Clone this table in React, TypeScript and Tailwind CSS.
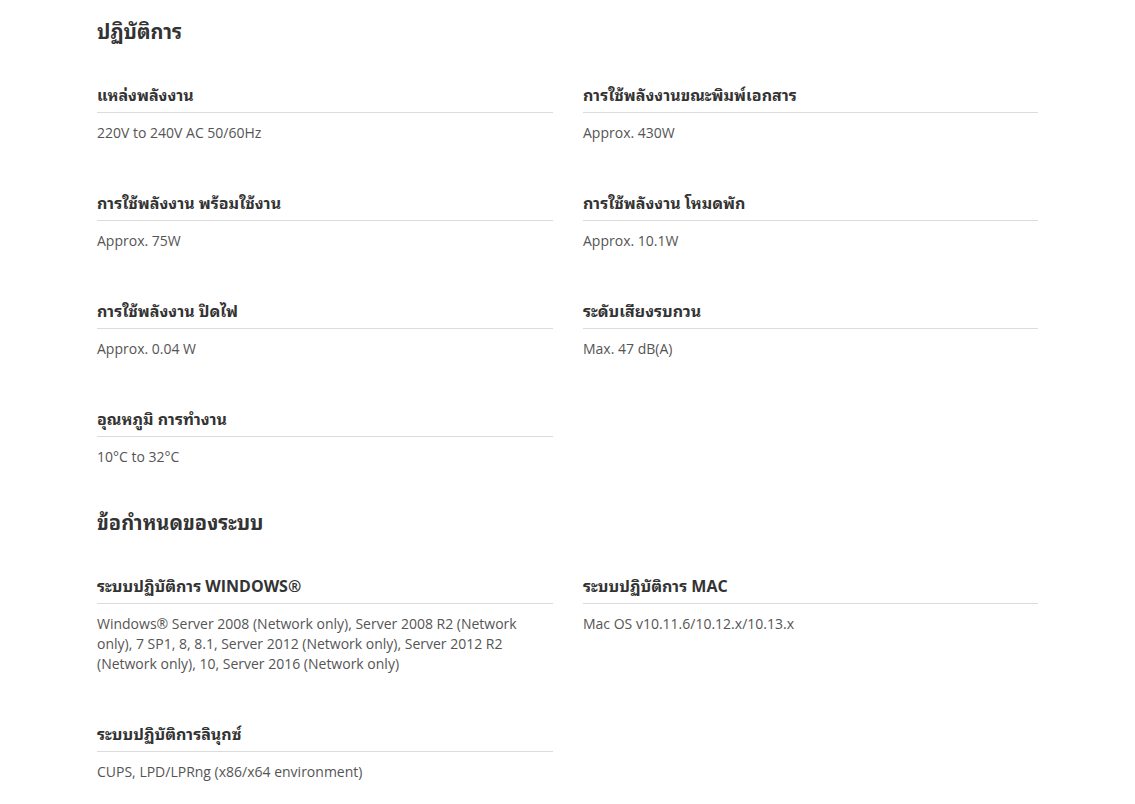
import React from "react";

type Item = { title: string; value: string };

const sections: { heading: string; items: Item[] }[] = [
  {
    heading: "ปฏิบัติการ",
    items: [
      { title: "แหล่งพลังงาน", value: "220V to 240V AC 50/60Hz" },
      { title: "การใช้พลังงานขณะพิมพ์เอกสาร", value: "Approx. 430W" },
      { title: "การใช้พลังงาน พร้อมใช้งาน", value: "Approx. 75W" },
      { title: "การใช้พลังงาน โหมดพัก", value: "Approx. 10.1W" },
      { title: "การใช้พลังงาน ปิดไฟ", value: "Approx. 0.04 W" },
      { title: "ระดับเสียงรบกวน", value: "Max. 47 dB(A)" },
      { title: "อุณหภูมิ การทำงาน", value: "10°C to 32°C" },
    ],
  },
  {
    heading: "ข้อกำหนดของระบบ",
    items: [
      {
        title: "ระบบปฏิบัติการ WINDOWS®",
        value:
          "Windows® Server 2008 (Network only), Server 2008 R2 (Network only), 7 SP1, 8, 8.1, Server 2012 (Network only), Server 2012 R2 (Network only), 10, Server 2016 (Network only)",
      },
      { title: "ระบบปฏิบัติการ MAC", value: "Mac OS v10.11.6/10.12.x/10.13.x" },
      { title: "ระบบปฏิบัติการลินุกซ์", value: "CUPS, LPD/LPRng (x86/x64 environment)" },
    ],
  },
];

export default function App() {
  return (
    <div
      className="min-h-[804px] bg-white pl-[97px] pt-[18px]"
      style={{
        fontFamily:
          '"Open Sans", "Noto Sans Thai Looped", "Tahoma", "Leelawadee UI", "Loma", "Garuda", "Noto Sans Thai", "Noto Sans", sans-serif',
      }}
    >
      <div className="w-[941px]">
        {sections.map((s) => (
          <section key={s.heading} className="mb-[42px]">
            <h2 className="mb-[37px] text-[20px] font-bold leading-[28px] text-[#333]">{s.heading}</h2>
            <div className="grid grid-cols-[456px_455px] gap-x-[30px] gap-y-[48px]">
              {s.items.map((it) => (
                <div key={it.title}>
                  <h3 className="border-b border-[#dcdcdc] pb-[5px] text-[16px] font-bold leading-[24px] text-[#333]">
                    {it.title}
                  </h3>
                  <p className="mt-[10px] pr-[30px] text-[14px] leading-[20px] text-[#555]">{it.value}</p>
                </div>
              ))}
            </div>
          </section>
        ))}
      </div>
    </div>
  );
}
